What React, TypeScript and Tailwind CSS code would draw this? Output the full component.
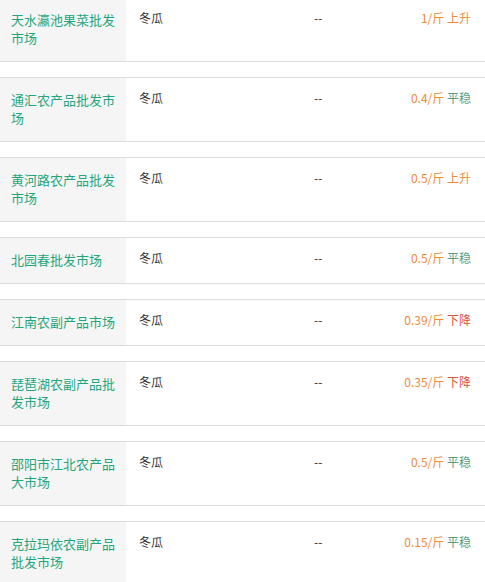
const rows = [
  { name: "天水瀛池果菜批发市场", price: "1/斤", trend: "上升" },
  { name: "通汇农产品批发市场", price: "0.4/斤", trend: "平稳" },
  { name: "黄河路农产品批发市场", price: "0.5/斤", trend: "上升" },
  { name: "北园春批发市场", price: "0.5/斤", trend: "平稳" },
  { name: "江南农副产品市场", price: "0.39/斤", trend: "下降" },
  { name: "琵琶湖农副产品批发市场", price: "0.35/斤", trend: "下降" },
  { name: "邵阳市江北农产品大市场", price: "0.5/斤", trend: "平稳" },
  { name: "克拉玛依农副产品批发市场", price: "0.15/斤", trend: "平稳" },
];

const trendColor = (t: string) => {
  if (t === "上升") return "text-[#ee8a3c]";
  if (t === "下降") return "text-[#d9573a]";
  return "text-[#5b9a7c]";
};

const App = () => {
  return (
    <div
      className="w-[485px] h-[582px] overflow-hidden bg-white"
      style={{ fontFamily: '"Noto Sans CJK SC", "Microsoft YaHei", sans-serif' }}
    >
      <div className="-mt-[3px] flex flex-col gap-[15px]">
        {rows.map((r) => (
          <div key={r.name} className="flex border-y border-[#dcdcdc]">
            <div className="w-[126px] shrink-0 bg-[#f5f5f5] pl-[11px] pr-[9px] pt-[13px] pb-[14px] text-[13px] leading-[18px] text-[#1fa67d]">
              {r.name}
            </div>
            <div className="w-[175px] shrink-0 pl-[13px] pt-[11px] text-[12px] leading-[18px] text-[#333]">
              冬瓜
            </div>
            <div className="w-[60px] shrink-0 pl-[13px] pt-[11px] text-[12px] leading-[18px] text-[#333]">
              --
            </div>
            <div className="flex-1 pr-[14px] pt-[11px] text-right text-[12px] leading-[18px]">
              <span className="text-[#ee8a3c]">{r.price}</span>{" "}
              <span className={trendColor(r.trend)}>{r.trend}</span>
            </div>
          </div>
        ))}
      </div>
    </div>
  );
};

export default App;
